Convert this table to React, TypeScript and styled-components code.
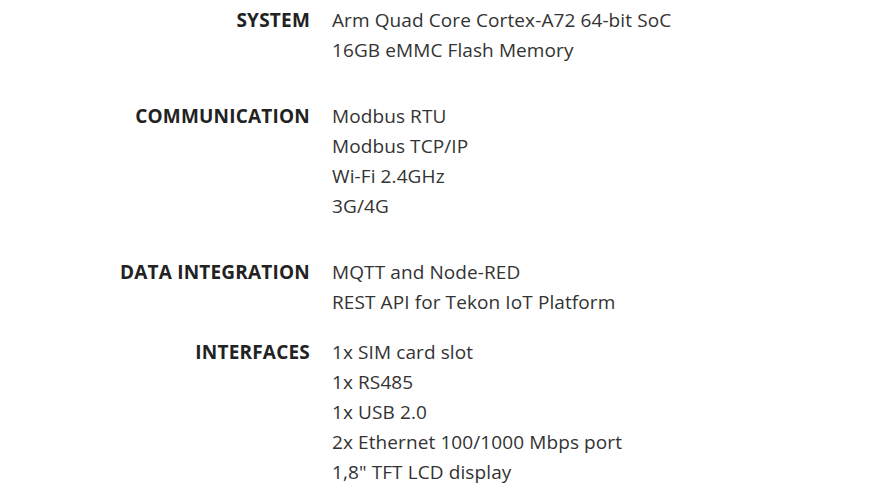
import React from 'react';
import styled, { createGlobalStyle } from 'styled-components';

const GlobalStyle = createGlobalStyle`
  html, body {
    margin: 0;
    padding: 0;
    background: #ffffff;
  }
  body {
    font-family: 'Open Sans', 'Noto Sans', sans-serif;
  }
`;

const specs = [
  { label: 'SYSTEM', values: ['Arm Quad Core Cortex-A72 64-bit SoC', '16GB eMMC Flash Memory'], gap: 0 },
  { label: 'COMMUNICATION', values: ['Modbus RTU', 'Modbus TCP/IP', 'Wi-Fi 2.4GHz', '3G/4G'], gap: 36 },
  { label: 'DATA INTEGRATION', values: ['MQTT and Node-RED', 'REST API for Tekon IoT Platform'], gap: 36 },
  {
    label: 'INTERFACES',
    values: ['1x SIM card slot', '1x RS485', '1x USB 2.0', '2x Ethernet 100/1000 Mbps port', '1,8" TFT LCD display'],
    gap: 20,
  },
];

const SpecTable = styled.div`
  display: flex;
  flex-direction: column;
  padding-top: 5px;
`;

const SpecRow = styled.div<{ $gap: number }>`
  display: grid;
  grid-template-columns: 310px 1fr;
  column-gap: 22px;
  margin-top: ${props => props.$gap}px;
`;

const Label = styled.div`
  text-align: right;
  font-weight: 700;
  font-size: 19px;
  line-height: 30px;
  color: #222222;
  letter-spacing: 0.2px;
`;

const Values = styled.div`
  display: flex;
  flex-direction: column;
`;

const Value = styled.div`
  font-size: 19px;
  line-height: 30px;
  color: #333333;
  letter-spacing: 0.1px;
  white-space: nowrap;
`;

const App: React.FC = () => {
  return (
    <>
      <GlobalStyle />
      <SpecTable>
        {specs.map(spec => (
          <SpecRow key={spec.label} $gap={spec.gap}>
            <Label>{spec.label}</Label>
            <Values>
              {spec.values.map(v => (
                <Value key={v}>{v}</Value>
              ))}
            </Values>
          </SpecRow>
        ))}
      </SpecTable>
    </>
  );
};

export default App;
